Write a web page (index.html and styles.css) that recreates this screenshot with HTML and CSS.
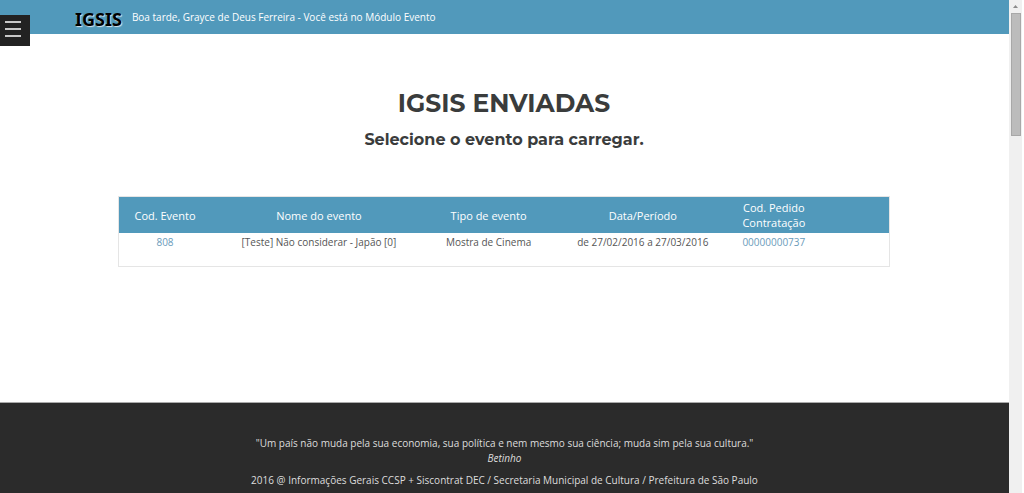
FILE: index.html
```html
<!DOCTYPE html>
<html lang="pt-BR">
<head>
<meta charset="utf-8">
<title>IGSIS - Módulo Evento</title>
<link rel="stylesheet" href="styles.css">
</head>
<body>
<div class="shell">
  <div class="page">
    <header class="topbar">
      <a class="brand" href="#">IGSIS</a>
      <p class="greeting">Boa tarde, Grayce de Deus Ferreira - Você está no Módulo Evento</p>
    </header>
    <button class="menu-toggle" type="button" aria-label="Menu">
      <svg width="16" height="16" viewBox="0 0 16 16" aria-hidden="true"><path d="M0 1h16M0 8h16M0 15h16" stroke="#fff" stroke-width="1.600"/></svg>
    </button>
    <main class="content">
      <h1 class="title">IGSIS ENVIADAS</h1>
      <h2 class="subtitle">Selecione o evento para carregar.</h2>
      <table class="events">
        <colgroup>
          <col class="col-code"><col class="col-name"><col class="col-type"><col class="col-date"><col class="col-order"><col class="col-action">
        </colgroup>
        <thead>
          <tr><th>Cod. Evento</th><th>Nome do evento</th><th>Tipo de evento</th><th>Data/Período</th><th>Cod. Pedido Contratação</th><td></td></tr>
        </thead>
        <tbody>
          <tr><td><a href="#">808</a></td><td>[Teste] Não considerar - Japão [0]</td><td>Mostra de Cinema</td><td>de 27/02/2016 a 27/03/2016</td><td><a href="#">00000000737</a></td><td></td></tr>
        </tbody>
      </table>
    </main>
    <footer class="footer">
      <p class="quote">"Um país não muda pela sua economia, sua política e nem mesmo sua ciência; muda sim pela sua cultura."<br><em>Betinho</em></p>
      <p class="credits">2016 @ Informações Gerais CCSP + Siscontrat DEC / Secretaria Municipal de Cultura / Prefeitura de São Paulo</p>
    </footer>
  </div>
  <div class="scrollbar" aria-hidden="true">
    <svg class="arrow" width="5" height="3" viewBox="0 0 5 3"><path d="M0 3 2.500 0 5 3z" fill="#8b8b8b"/></svg>
    <div class="thumb"></div>
  </div>
</div>
</body>
</html>
```
FILE: styles.css
```css
* { box-sizing: border-box; }

body {
  margin: 0;
  background: #fff;
  color: #555;
  font-family: "Open Sans", sans-serif;
  font-size: 10px;
  line-height: 15px;
}

a { color: #6a9bba; text-decoration: none; }
p { margin: 0; }

.shell { display: flex; height: 100vh; padding-right: 2px; }

.page {
  position: relative;
  display: flex;
  flex: 1;
  flex-direction: column;
  min-width: 0;
  overflow: hidden;
}

.topbar {
  display: flex;
  flex: none;
  align-items: center;
  gap: 10px;
  height: 34px;
  padding-left: 75px;
  background: #5199bb;
}

.brand {
  padding-top: 3px;
  color: #000;
  font: bold 18px/20px "Noto Sans", sans-serif;
  text-shadow: 1px 1px 1px #d5e4ec;
}

.greeting { color: #fff; }

.menu-toggle {
  position: absolute;
  top: 15px;
  left: 0;
  width: 30px;
  height: 31px;
  padding: 0 4px 3px 5px;
  border: 0;
  background: #222;
}

.menu-toggle svg { display: block; }

.content { flex: 1; padding: 52px 119px 0 118px; text-align: center; }

.title,
.subtitle {
  margin: 0;
  color: #3a3c3c;
  font-family: Montserrat, Inter, sans-serif;
  font-weight: 700;
}

.title { font-size: 25px; line-height: 34px; }
.subtitle { margin: 8px 0 44px; font-size: 16px; line-height: 24px; }

.events {
  width: 100%;
  border: 1px solid #e5e5e5;
  border-collapse: collapse;
  table-layout: fixed;
}

.col-code { width: 12%; }
.col-name { width: 28%; }
.col-type { width: 16%; }
.col-date { width: 24%; }
.col-order, .col-action { width: 10%; }

.events thead { background: #5199bb; color: #fff; font-size: 11px; }
.events th { padding: 3px; font-weight: 400; }
.events tbody td { height: 33px; padding: 2px 0; vertical-align: top; }

.footer {
  flex: none;
  height: 91px;
  padding-top: 33px;
  border-top: 1px solid #aaa;
  background: #2b2b2b;
  color: #ddd;
  text-align: center;
}

.quote { margin-bottom: 7px; }

.scrollbar {
  display: flex;
  flex: none;
  flex-direction: column;
  align-items: center;
  width: 13px;
  padding-top: 5px;
  background: #f0f0f0;
}

.arrow { flex: none; margin-bottom: 5px; }
.thumb { width: 10px; height: 25vh; border: 1px solid #a8a8a8; background: #bcbcbc; }
```
